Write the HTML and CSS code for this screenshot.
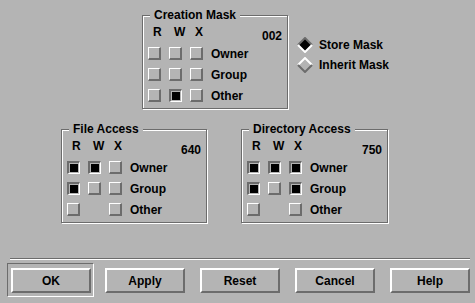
FILE: index.html
```html
<!DOCTYPE html>
<html lang="en">
<head>
  <meta charset="UTF-8">
  <title>Permissions</title>
  <link rel="stylesheet" href="styles.css">
</head>
<body>
  <div class="dialog">
    <div class="top-row">
      <div class="group">
        <span class="group-title">Creation Mask</span>
        <div class="perm-grid">
          <span class="col-head">R</span>
          <span class="col-head">W</span>
          <span class="col-head">X</span>
          <span class="octal">002</span>

          <span class="check"></span>
          <span class="check"></span>
          <span class="check"></span>
          <span class="who">Owner</span>

          <span class="check"></span>
          <span class="check"></span>
          <span class="check"></span>
          <span class="who">Group</span>

          <span class="check"></span>
          <span class="check on"></span>
          <span class="check"></span>
          <span class="who">Other</span>
        </div>
      </div>

      <div class="radio-list">
        <div class="radio">
          <svg class="diamond" width="16" height="16" viewBox="0 0 16 16">
            <polygon points="8,1 15,8 8,15 1,8" fill="#000"/>
            <polyline points="1,8 8,1 15,8" fill="none" stroke="#6c6c6c" stroke-width="2"/>
            <polyline points="15,8 8,15 1,8" fill="none" stroke="#fff" stroke-width="2"/>
          </svg>
          <span>Store Mask</span>
        </div>
        <div class="radio">
          <svg class="diamond" width="16" height="16" viewBox="0 0 16 16">
            <polyline points="1,8 8,1 15,8" fill="none" stroke="#fff" stroke-width="2"/>
            <polyline points="15,8 8,15 1,8" fill="none" stroke="#6c6c6c" stroke-width="2"/>
          </svg>
          <span>Inherit Mask</span>
        </div>
      </div>
    </div>

    <div class="bottom-row">
      <div class="group">
        <span class="group-title">File Access</span>
        <div class="perm-grid">
          <span class="col-head">R</span>
          <span class="col-head">W</span>
          <span class="col-head">X</span>
          <span class="octal">640</span>

          <span class="check on"></span>
          <span class="check on"></span>
          <span class="check"></span>
          <span class="who">Owner</span>

          <span class="check on"></span>
          <span class="check"></span>
          <span class="check"></span>
          <span class="who">Group</span>

          <span class="check"></span>
          <span class="empty"></span>
          <span class="check"></span>
          <span class="who">Other</span>
        </div>
      </div>

      <div class="group">
        <span class="group-title">Directory Access</span>
        <div class="perm-grid">
          <span class="col-head">R</span>
          <span class="col-head">W</span>
          <span class="col-head">X</span>
          <span class="octal">750</span>

          <span class="check on"></span>
          <span class="check on"></span>
          <span class="check on"></span>
          <span class="who">Owner</span>

          <span class="check on"></span>
          <span class="check"></span>
          <span class="check on"></span>
          <span class="who">Group</span>

          <span class="check"></span>
          <span class="empty"></span>
          <span class="check"></span>
          <span class="who">Other</span>
        </div>
      </div>
    </div>

    <div class="separator"></div>

    <div class="buttons">
      <div class="default-ring">
        <button class="btn">OK</button>
      </div>
      <button class="btn">Apply</button>
      <button class="btn">Reset</button>
      <button class="btn">Cancel</button>
      <button class="btn">Help</button>
    </div>
  </div>
</body>
</html>
```

FILE: styles.css
```css
:root {
  --bg: #b4b4b4;
  --shadow-dark: #6c6c6c;
  --shadow-light: #fff;
}

* {
  box-sizing: border-box;
}

body {
  margin: 0;
  background-color: var(--bg);
  color: #000;
  font-family: 'Liberation Sans', Arial, sans-serif;
  font-weight: bold;
  font-size: 12px;
  line-height: 14px;
}

.dialog {
  width: 475px;
  height: 303px;
  padding-top: 15px;
}

.top-row {
  display: flex;
  padding-left: 142px;
  gap: 9px;
}

.bottom-row {
  display: flex;
  margin-top: 20px;
  padding-left: 61px;
  gap: 34px;
}

/* etched-in frame with a title over the top line */
.group {
  position: relative;
  width: 146px;
  border: 1px solid var(--shadow-dark);
  box-shadow: inset 1px 1px 0 var(--shadow-light), 1px 1px 0 var(--shadow-light);
  padding: 9px 5px 6px 5px;
}

.bottom-row .group:last-child {
  width: 147px;
}

.group-title {
  position: absolute;
  top: -8px;
  left: 7px;
  padding: 0 4px;
  background-color: var(--bg);
  white-space: nowrap;
}

.perm-grid {
  display: grid;
  grid-template-columns: 13px 13px 13px 1fr;
  grid-template-rows: 14px 13px 13px 13px;
  column-gap: 8px;
  row-gap: 8px;
}

.perm-grid .col-head {
  padding-left: 5px;
}

.octal {
  justify-self: end;
  margin-top: 4px;
}

.who {
  line-height: 13px;
  margin-top: 1px;
  white-space: nowrap;
}

.check {
  width: 13px;
  height: 13px;
  border-style: solid;
  border-width: 1px 2px 2px 1px;
  border-color: var(--shadow-light) var(--shadow-dark) var(--shadow-dark) var(--shadow-light);
}

.check.on {
  border-width: 2px 1px 1px 2px;
  border-color: var(--shadow-dark) var(--shadow-light) var(--shadow-light) var(--shadow-dark);
  background-color: #000;
  box-shadow: inset 0 0 0 1px var(--bg);
}

.radio-list {
  margin-top: 20px;
}

.radio {
  display: flex;
  align-items: center;
  gap: 6px;
  height: 20px;
}

.diamond {
  display: block;
}

.separator {
  margin: 35px 5px 0 10px;
  border-top: 1px solid var(--shadow-dark);
  border-bottom: 1px solid var(--shadow-light);
}

.buttons {
  display: flex;
  align-items: flex-start;
  gap: 15px;
  margin-top: 3px;
  padding-left: 7px;
}

.default-ring {
  padding: 4px 2px 3px 3px;
  border: 1px solid;
  border-color: var(--shadow-dark) var(--shadow-light) var(--shadow-light) var(--shadow-dark);
  margin-right: -4px;
}

.buttons > .btn {
  margin-top: 5px;
}

.btn {
  width: 80px;
  height: 25px;
  padding: 0;
  background-color: var(--bg);
  border-style: solid;
  border-width: 2px;
  border-color: var(--shadow-light) var(--shadow-dark) var(--shadow-dark) var(--shadow-light);
  font-family: inherit;
  font-weight: bold;
  font-size: 12px;
  color: #000;
}
```
